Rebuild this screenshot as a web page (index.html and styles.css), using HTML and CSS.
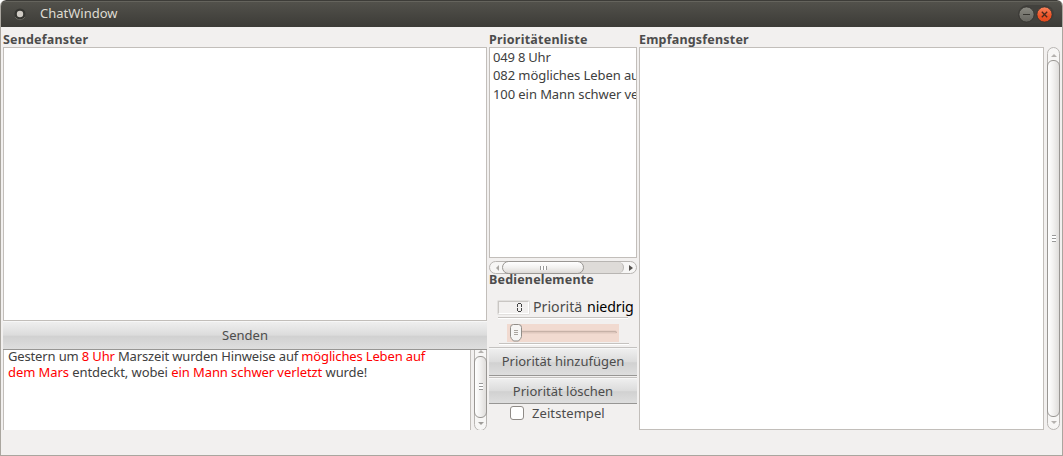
FILE: index.html
```html
<!DOCTYPE html>
<html lang="de">
<head>
<meta charset="utf-8">
<title>ChatWindow</title>
<link rel="stylesheet" href="styles.css">
</head>
<body>
<div class="window">
  <header class="titlebar">
    <svg class="menu-dot" width="14" height="14" viewBox="0 0 14 14"><circle cx="7" cy="7" r="5.5" fill="#353531"/><path d="M2 10A6 6 0 0 0 12 10" fill="none" stroke="#67665f"/><circle cx="7" cy="7" r="3.2" fill="#cfcbc4"/></svg>
    <span class="title">ChatWindow</span>
    <svg class="controls" width="38" height="20" viewBox="0 0 38 20">
      <defs>
        <linearGradient id="gray" x2="0" y2="1"><stop stop-color="#8b8a82"/><stop offset="1" stop-color="#65645e"/></linearGradient>
        <linearGradient id="red" x2="0" y2="1"><stop stop-color="#f7855f"/><stop offset=".6" stop-color="#ed5225"/><stop offset="1" stop-color="#df4a1f"/></linearGradient>
      </defs>
      <rect x="1" y="1" width="36" height="18" rx="9" fill="#42413d"/>
      <circle cx="9.5" cy="10.5" r="7.6" fill="url(#gray)" stroke="#32312d" stroke-width=".8"/>
      <path d="M6 10.500h7" stroke="#363530"/>
      <circle cx="27.5" cy="10.5" r="7.6" fill="url(#red)" stroke="#32312d" stroke-width=".8"/>
      <path d="M24.800 7.800l5.400 5.400M30.200 7.800l-5.400 5.400" stroke="#48291d" stroke-width="1.3"/>
    </svg>
  </header>
  <main class="content">
    <section class="send">
      <h2 class="label"><span class="t-send">Sendefanster</span></h2>
      <div class="box send-box"></div>
      <button class="button send-button"><span>Senden</span></button>
      <div class="editor">
        <div class="editor-text"><div class="line t-l1">Gestern um <b>8 Uhr</b> Marszeit wurden Hinweise auf <b>mögliches Leben auf</b></div><div class="line t-l2"><b>dem Mars</b> entdeckt, wobei <b>ein Mann schwer verletzt</b> wurde!</div></div>
        <div class="vscroll editor-scroll">
          <i class="arrow up"></i><div class="thumb"><i class="grip"></i></div><i class="arrow down dark"></i>
        </div>
      </div>
    </section>
    <section class="priorities">
      <h2 class="label"><span class="t-prio">Prioritätenliste</span></h2>
      <ul class="box list">
        <li class="t-i1">049 8 Uhr</li>
        <li class="t-i2">082 mögliches Leben auf</li>
        <li class="t-i3">100 ein Mann schwer verletzt</li>
      </ul>
      <div class="hscroll">
        <i class="arrow left"></i><div class="thumb"><i class="grip"></i></div><i class="arrow right"></i>
      </div>
      <h2 class="label controls-label"><span class="t-bed">Bedienelemente</span></h2>
      <div class="level">
        <div class="lcd"><svg width="5" height="9" viewBox="0 0 5 9"><path d="M1 .5h3M.5 1v3M4.500 1v3M.5 5v3M4.500 5v3M1 8.500h3" stroke="#444" fill="none"/></svg></div>
        <span class="level-name">Prioritä</span><span class="level-value">niedrig</span>
      </div>
      <div class="rule"></div>
      <div class="slider"><svg width="112" height="18" viewBox="0 0 112 18">
        <rect x="13" y="6.500" width="97" height="3" rx="1.500" fill="#dfc8be"/><path d="M13 7.500h95q1.500 0 1.500 1.500" fill="none" stroke="#c6b1a7"/>
        <path d="M6.500.5h5q3 0 3 3v9q0 1.500-3 4.500h-5q-3-3-3-4.500v-9q0-3 3-3z" fill="#f6f5f4" stroke="#918d88"/>
        <path d="M7 6.500h4M7 8.500h4M7 10.500h4" stroke="#aaa59f"/></svg></div>
      <div class="rule second"></div>
      <button class="button add"><span>Priorität hinzufügen</span></button>
      <button class="button del"><span>Priorität löschen</span></button>
      <label class="check"><span class="tick"></span><span class="t-zeit">Zeitstempel</span></label>
    </section>
    <section class="receive">
      <h2 class="label"><span class="t-emp">Empfangsfenster</span></h2>
      <div class="receive-row">
        <div class="box receive-box"></div>
        <div class="vscroll">
          <i class="arrow up"></i><div class="thumb"><i class="grip"></i></div><i class="arrow down"></i>
        </div>
      </div>
    </section>
  </main>
</div>
</body>
</html>
```
FILE: styles.css
```css
* { box-sizing: border-box; }
body { margin: 0; background: #fff; }
.window {
  width: 1063px; height: 456px; background: #f2f0ef; overflow: hidden;
  border: 1px solid #aaa69f; border-top: 0; border-radius: 6px 6px 0 0;
  font: 13px/16px "Noto Sans", "Open Sans", sans-serif; color: #404040;
}
.titlebar {
  height: 27px; margin: 0 -1px; padding: 0 8px 0 13px; display: flex; align-items: center;
  background: linear-gradient(#53524c, #3c3b37); border-top: 1px solid #3d3c38;
  box-shadow: inset 0 1px #65645d; border-radius: 6px 6px 0 0; color: #dfdbd2;
}
.title { margin-left: 13px; padding-bottom: 2px; white-space: nowrap; }
.controls { margin-left: auto; }
.content { display: grid; grid-template-columns: 484px 148px 422px; column-gap: 2px; padding: 6px 0 0 2px; }
.send, .priorities, .receive { display: flex; flex-direction: column; min-width: 0; }
.label { margin: 0; height: 14px; font-size: 12.5px; line-height: 14px; font-weight: 700; color: #4c4c4c; white-space: nowrap; }
.t-send { letter-spacing: .18px; }
.t-prio { letter-spacing: .24px; }
.t-bed { letter-spacing: .19px; }
.t-emp { letter-spacing: .2px; }
.t-l1 { letter-spacing: -.15px; }
.t-l2 { letter-spacing: -.08px; }
.t-i1 { letter-spacing: -.2px; }
.t-i2 { letter-spacing: -.08px; }
.t-i3 { letter-spacing: -.08px; }
.t-zeit { letter-spacing: .08px; }
.button span { white-space: nowrap; }
.box { background: #fff; border: 1px solid #c2beba; }
.send-box { height: 274px; }
.button {
  width: 100%; padding: 0; border: 0; border-bottom: 1px solid #979694; border-top: 1px solid #c4c2c0;
  background: linear-gradient(#f0f0f0, #dcdcdc 50%, #d1d1d1 55%, #dedede);
  box-shadow: inset 0 1px #f7f7f7; font: inherit; color: #4c4c4c;
}
.send-button { height: 29px; border-top: 0; }
.editor { height: 80px; display: flex; overflow: hidden; }
.editor-text { width: 468px; flex: none; padding-left: 4px; background: #fff; border: solid #c2beba; border-width: 0 1px; }
.line { white-space: nowrap; height: 16px; }
.line:first-child { height: 14px; line-height: 12px; }
.editor-text b { font-weight: 400; color: #f00; }
.vscroll {
  width: 13px; border: 1px solid #b8b5b2; border-radius: 7px; background: #f7f6f5;
  display: flex; flex-direction: column; align-items: center; flex: none;
}
.vscroll .thumb {
  width: 13px; border: 1px solid #999693; border-radius: 6px; flex: 1;
  background: linear-gradient(90deg, #fff, #f3f2f1 45%, #dfdddb);
  display: flex; align-items: center; justify-content: center;
}
.vscroll .grip { width: 4px; height: 7px; background: repeating-linear-gradient(#999 0 1px, #fff 1px 3px); }
.arrow { flex: none; border: 3px solid transparent; height: 0; width: 0; }
.arrow.up { border-top: 0; border-bottom-color: #b5b2af; margin: 6px 0 3px; }
.arrow.down { border-bottom: 0; border-top-color: #b5b2af; margin: 4px 0 5px; }
.arrow.down.dark { border-top-color: #a09d9a; }
.editor-scroll { margin: -7px 0 -1px 3px; }
.editor-scroll .grip { margin-top: -2px; }
.hscroll {
  height: 13px; margin-top: 3px; border: 1px solid #b8b5b2; border-radius: 7px;
  background: #f7f6f5; display: flex; align-items: center;
}
.hscroll .thumb {
  z-index: 1; width: 82px; height: 13px; flex: none; border: 1px solid #999693; border-radius: 7px;
  background: linear-gradient(#fff, #f2f1f0 50%, #dedbd8);
  display: flex; align-items: center; justify-content: center;
}
.hscroll .grip { width: 7px; height: 4px; background: repeating-linear-gradient(90deg, #999 0 1px, #fff 1px 3px); }
.hscroll::after {
  content: ""; order: 1; width: 46px; height: 11px; margin-left: -7px; background: #dedbd8;
  border-right: 1px solid #b8b5b2; border-radius: 0 6px 6px 0;
}
.arrow.left { border-left: 0; border-right-color: #aaa7a4; margin: 0 3px 0 6px; }
.arrow.right { order: 2; border-right: 0; border-left: 4px solid #55524f; margin-left: 5px; }
.list { height: 211px; margin: 0; padding: 0 0 0 3px; list-style: none; overflow: hidden; line-height: 18.4px; white-space: nowrap; }
.controls-label { margin-top: -1px; }
.level { height: 30px; display: flex; align-items: center; padding: 10px 0 0 9px; font-size: 14.2px; white-space: nowrap; }
.lcd { width: 31px; height: 13px; margin: 0 4px 0 0; border: 1px solid #c9c6c3; border-right-color: #fff; border-bottom-color: #fff; box-shadow: 0 0 0 .5px #d3d0cd; display: flex; align-items: center; justify-content: flex-end; padding-right: 6px; flex: none; }
.level-name { width: 54px; color: #4c4c4c; flex: none; }
.level-value { color: #000; letter-spacing: -.1px; }
.rule { width: 130px; height: 2px; margin-left: 9px; border-top: 1px solid #c5c2bf; background: #fff; }
.slider { width: 112px; height: 18px; margin: 5px 0 0 18px; background: #f1dad0; }
.slider svg { display: block; }
.rule.second { margin: 1px 0 0 10px; }
.add { height: 29px; margin-top: 2px; padding-bottom: 1px; }
.del { height: 27px; margin-top: 1px; }
.check { display: flex; height: 18px; align-items: center; padding-left: 21px; color: #4c4c4c; }
.check .t-zeit { padding-bottom: 1px; }
.tick { width: 14px; height: 14px; background: #fff; border: 1px solid #8f8b87; border-radius: 3px; margin-right: 8px; }
.receive-row { display: flex; height: 383px; }
.receive-box { width: 405px; margin-right: 3px; }
```
